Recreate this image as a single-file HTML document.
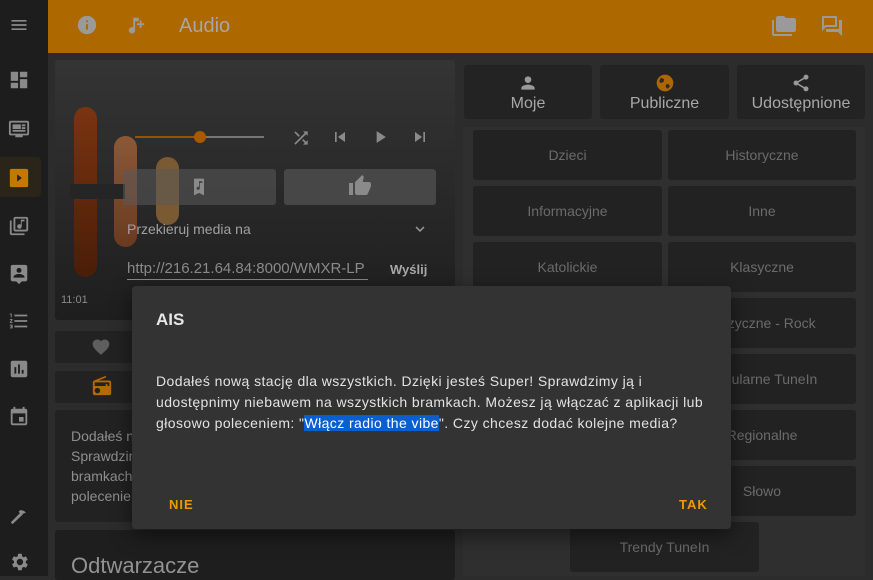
<!DOCTYPE html>
<html><head><meta charset="utf-8"><style>
*{box-sizing:border-box;margin:0;padding:0}
body{width:873px;height:576px;overflow:hidden;background:#2c2c2c;font-family:"Liberation Sans","DejaVu Sans",sans-serif;position:relative}
.abs{position:absolute}
.sb{left:0;top:0;width:48px;height:576px;background:#1d1d1d}
.hdr{left:48px;top:0;width:825px;height:53px;background:#ad6800}
.ic{position:absolute;fill:#8a8a8a}
.btn{position:absolute;background:#222;border-radius:3px;color:#6b6b6b;font-size:14px;display:flex;align-items:center;justify-content:center}
.tab{position:absolute;background:#232323;border-radius:3px;color:#a8a8a8;font-size:16px;text-align:center}
</style></head><body>
<div class="abs sb"></div>
<div class="abs" style="left:0;top:157px;width:41px;height:40px;background:#2a2419;border-radius:0 4px 4px 0"></div>
<svg class="ic" style="left:9px;top:15px" width="20" height="20" viewBox="0 0 24 24"><path d="M3 6h18v2H3zm0 5h18v2H3zm0 5h18v2H3z"/></svg>
<svg class="ic" style="left:8px;top:69px" width="22" height="22" viewBox="0 0 24 24"><path d="M3 13h8V3H3zm0 8h8v-6H3zm10 0h8V11h-8zm0-18v6h8V3z"/></svg>
<svg class="ic" style="left:8px;top:118px" width="22" height="22" viewBox="0 0 24 24"><path d="M21 3H3c-1.1 0-2 .9-2 2v12c0 1.1.9 2 2 2h5v2h8v-2h5c1.1 0 2-.9 2-2V5c0-1.1-.9-2-2-2zm0 14H3V5h18zM5 7h9v5H5zm10 0h4v2h-4zm0 3h4v2h-4zM5 13h14v2H5z"/></svg>
<svg style="position:absolute;left:8px;top:167px" width="22" height="22" viewBox="0 0 24 24"><rect x="2" y="2" width="20" height="20" rx="2" fill="#c57800"/><path d="M10 8l5 4-5 4z" fill="#222"/></svg>
<svg class="ic" style="left:8px;top:215px" width="22" height="22" viewBox="0 0 24 24"><path d="M20 2H8c-1.1 0-2 .9-2 2v12c0 1.1.9 2 2 2h12c1.1 0 2-.9 2-2V4c0-1.1-.9-2-2-2zm0 14H8V4h12zm-7.5-1a2.5 2.5 0 0 0 2.5-2.5V7h3V5h-4v5.5a2.5 2.5 0 1 0-1.5 4.5zM4 6H2v14c0 1.1.9 2 2 2h14v-2H4z"/></svg>
<svg class="ic" style="left:8px;top:263px" width="22" height="22" viewBox="0 0 24 24"><path d="M19 2H5c-1.1 0-2 .9-2 2v14c0 1.1.9 2 2 2h4l3 3 3-3h4c1.1 0 2-.9 2-2V4c0-1.1-.9-2-2-2zm-7 3.3a2.7 2.7 0 1 1 0 5.4 2.7 2.7 0 0 1 0-5.4zM18 16H6v-.9c0-2 4-3.1 6-3.1s6 1.1 6 3.1z"/></svg>
<svg class="ic" style="left:8px;top:310px" width="22" height="22" viewBox="0 0 24 24"><path d="M2 17h2v.5H3v1h1v.5H2v1h3v-4H2zm1-9h1V4H2v1h1zm-1 3h1.8L2 13.1v.9h3v-1H3.2L5 10.9V10H2zm5-6v2h14V5zm0 14h14v-2H7zm0-6h14v-2H7z"/></svg>
<svg class="ic" style="left:8px;top:358px" width="22" height="22" viewBox="0 0 24 24"><path d="M19 3H5c-1.1 0-2 .9-2 2v14c0 1.1.9 2 2 2h14c1.1 0 2-.9 2-2V5c0-1.1-.9-2-2-2zM9 17H7v-7h2zm4 0h-2V7h2zm4 0h-2v-4h2z"/></svg>
<svg class="ic" style="left:8px;top:406px" width="22" height="22" viewBox="0 0 24 24"><path d="M17 12h-5v5h5zM16 1v2H8V1H6v2H5c-1.1 0-2 .9-2 2v14c0 1.1.9 2 2 2h14c1.1 0 2-.9 2-2V5c0-1.1-.9-2-2-2h-1V1zm3 18H5V8h14z"/></svg>
<svg class="ic" style="left:8px;top:504px" width="22" height="22" viewBox="0 0 24 24"><path d="M3 20l10-10-1.5-1.5 2-2 4 1 2 2-3 1-1 1.5L5 22z"/></svg>
<svg class="ic" style="left:8px;top:551px" width="22" height="22" viewBox="0 0 24 24"><path d="M19.4 13a7.5 7.5 0 0 0 0-2l2.1-1.6-2-3.5-2.5 1a7 7 0 0 0-1.7-1L15 3h-4l-.4 2.7a7 7 0 0 0-1.7 1l-2.5-1-2 3.5L6.6 11a7.5 7.5 0 0 0 0 2l-2.2 1.6 2 3.5 2.5-1a7 7 0 0 0 1.7 1L11 21h4l.4-2.7a7 7 0 0 0 1.7-1l2.5 1 2-3.5zM13 15.5a3.5 3.5 0 1 1 0-7 3.5 3.5 0 0 1 0 7z"/></svg>

<div class="abs hdr"></div>
<svg class="ic" style="left:76px;top:14px;fill:#9a9a9a" width="22" height="22" viewBox="0 0 24 24"><path d="M12 2a10 10 0 1 0 0 20 10 10 0 0 0 0-20zm1 15h-2v-6h2zm0-8h-2V7h2z"/></svg>
<svg class="ic" style="left:124px;top:15px;fill:#9a9a9a" width="24" height="22" viewBox="0 0 24 24"><path d="M9 3v10.5A3.5 3.5 0 1 0 11 16V7h4V3zm9 6V6h-2v3h-3v2h3v3h2v-3h3V9z"/></svg>
<div class="abs" style="left:179px;top:15px;font-size:20px;color:#a6a6a6">Audio</div>
<svg class="ic" style="left:771px;top:14px;fill:#9a9a9a" width="26" height="24" viewBox="0 0 24 24"><path d="M2 6H0v14c0 1.1.9 2 2 2h18v-2H2zm20-2h-8l-2-2H6c-1.1 0-2 .9-2 2v12c0 1.1.9 2 2 2h16c1.1 0 2-.9 2-2V6c0-1.1-.9-2-2-2z"/></svg>
<svg class="ic" style="left:820px;top:14px;fill:#9a9a9a" width="24" height="24" viewBox="0 0 24 24"><path d="M15 4v7H5.2L4 12.2V4zm1-2H3c-.6 0-1 .4-1 1v14l4-4h10c.6 0 1-.4 1-1V3c0-.6-.4-1-1-1zm5 4h-2v9H6v2c0 .6.4 1 1 1h11l4 4V7c0-.6-.4-1-1-1z"/></svg>

<div class="abs" style="left:55px;top:60px;width:400px;height:260px;background:linear-gradient(#343434,#1e1e1e);border-radius:3px"></div>
<div class="abs" style="left:74px;top:107px;width:23px;height:170px;border-radius:12px;background:linear-gradient(#7a3410,#4a1d08)"></div>
<div class="abs" style="left:114px;top:136px;width:23px;height:111px;border-radius:12px;background:linear-gradient(#8b5838,#6a3a20)"></div>
<div class="abs" style="left:156px;top:157px;width:23px;height:68px;border-radius:12px;background:#7a5a32"></div>
<div class="abs" style="left:70px;top:184px;width:55px;height:15px;background:#252525"></div>
<div class="abs" style="left:135px;top:136px;width:65px;height:2px;background:#9a5200"></div>
<div class="abs" style="left:200px;top:136px;width:64px;height:2px;background:#777"></div>
<div class="abs" style="left:194px;top:131px;width:12px;height:12px;border-radius:50%;background:#a85a00"></div>
<svg class="ic" style="left:291px;top:128px;fill:#8a8a8a" width="20" height="20" viewBox="0 0 24 24"><path d="M10.6 9.2L5.4 4 4 5.4l5.2 5.2zM14.5 4l2 2L4 18.6 5.4 20 18 7.5l2 2V4zm.3 9.4l-1.4 1.4 3.1 3.1L14.5 20H20v-5.5l-2 2z"/></svg>
<svg class="ic" style="left:330px;top:127px" width="20" height="20" viewBox="0 0 24 24"><path d="M6 6h2v12H6zm3.5 6l8.5 6V6z"/></svg>
<svg class="ic" style="left:370px;top:127px" width="20" height="20" viewBox="0 0 24 24"><path d="M8 5v14l11-7z"/></svg>
<svg class="ic" style="left:410px;top:127px" width="20" height="20" viewBox="0 0 24 24"><path d="M6 18l8.5-6L6 6zM16 6v12h2V6z"/></svg>
<div class="abs" style="left:123px;top:169px;width:153px;height:36px;background:rgba(90,90,90,.55);border-radius:3px"></div>
<div class="abs" style="left:284px;top:169px;width:152px;height:36px;background:#474747;border-radius:3px"></div>
<svg class="ic" style="left:189px;top:177px" width="20" height="20" viewBox="0 0 24 24"><path d="M18 2H6v20l6-3 6 3zm-5 11.5a2 2 0 1 1-1-1.7V5h4v2h-3z"/></svg>
<svg class="ic" style="left:347px;top:174px" width="26" height="24" viewBox="0 0 24 24"><path d="M1 21h4V9H1zm22-11c0-1.1-.9-2-2-2h-6.3l1-4.6v-.3c0-.4-.2-.8-.4-1.1L14.2 1 7.6 7.6C7.2 7.9 7 8.4 7 9v10c0 1.1.9 2 2 2h9c.8 0 1.5-.5 1.8-1.2l3-7.1c.1-.2.2-.5.2-.7z"/></svg>
<div class="abs" style="left:127px;top:221px;font-size:14px;color:#a0a0a0">Przekieruj media na</div>
<svg class="ic" style="left:411px;top:220px;fill:#999" width="18" height="18" viewBox="0 0 24 24"><path d="M7.4 8.6L12 13.2l4.6-4.6L18 10l-6 6-6-6z"/></svg>
<div class="abs" style="left:127px;top:260px;width:241px;font-size:15px;color:#8a8a8a;overflow:hidden;white-space:nowrap;border-bottom:1px solid #888;padding-bottom:2px">http://216.21.64.84:8000/WMXR-LP</div>
<div class="abs" style="left:390px;top:262px;font-size:13px;color:#a8a8a8;font-weight:bold">Wyślij</div>
<div class="abs" style="left:61px;top:294px;font-size:11px;color:#8a8a8a">11:01</div>
<div class="abs" style="left:55px;top:331px;width:400px;height:32px;background:#222;border-radius:3px"></div>
<svg class="ic" style="left:91px;top:337px;fill:#5e5e5e" width="20" height="20" viewBox="0 0 24 24"><path d="M12 21.4l-1.5-1.3C5.4 15.4 2 12.3 2 8.5 2 5.4 4.4 3 7.5 3c1.7 0 3.4.8 4.5 2.1C13.1 3.8 14.8 3 16.5 3 19.6 3 22 5.4 22 8.5c0 3.8-3.4 6.9-8.5 11.5z"/></svg>
<div class="abs" style="left:55px;top:371px;width:400px;height:32px;background:#222;border-radius:3px"></div>
<svg class="ic" style="left:91px;top:375px;fill:#b56a00" width="22" height="22" viewBox="0 0 24 24"><path d="M3.2 6.2C2.5 6.5 2 7.2 2 8v12c0 1.1.9 2 2 2h16c1.1 0 2-.9 2-2V8c0-1.1-.9-2-2-2H8.3l8.3-3.4L15.9 1zM7 20a3 3 0 1 1 0-6 3 3 0 0 1 0 6zm13-8h-2v-2h-2v2H4V8h16z"/></svg>
<div class="abs" style="left:55px;top:410px;width:400px;height:112px;background:#222;border-radius:3px"></div>
<div class="abs" style="left:71px;top:426px;font-size:14px;line-height:20px;color:#8e8e8e;width:70px;overflow:hidden;white-space:nowrap">Dodałeś n<br>Sprawdzim<br>bramkach<br>poleceniem</div>
<div class="abs" style="left:55px;top:530px;width:400px;height:50px;background:#1e1e1e;border-radius:3px"></div>
<div class="abs" style="left:71px;top:553px;font-size:22px;color:#929292">Odtwarzacze</div>

<div class="tab" style="left:464px;top:65px;width:128px;height:54px"><svg style="display:block;margin:8px auto 0" width="20" height="20" viewBox="0 0 24 24" fill="#999"><path d="M12 12a4 4 0 1 0 0-8 4 4 0 0 0 0 8zm0 2c-2.7 0-8 1.3-8 4v2h16v-2c0-2.7-5.3-4-8-4z"/></svg><div style="margin-top:2px">Moje</div></div>
<div class="tab" style="left:600px;top:65px;width:129px;height:54px"><svg style="display:block;margin:8px auto 0" width="20" height="20" viewBox="0 0 24 24"><circle cx="12" cy="12" r="10" fill="#ad6600"/><path d="M7 6c2 0 3 1 4 2l-1 3-3 1-2-2zm6 8l3-1 2 3-3 3-2-2z" fill="#2a2a2a"/></svg><div style="margin-top:2px">Publiczne</div></div>
<div class="tab" style="left:737px;top:65px;width:128px;height:54px"><svg style="display:block;margin:8px auto 0" width="20" height="20" viewBox="0 0 24 24" fill="#999"><path d="M18 16c-.8 0-1.5.3-2 .8l-7.1-4.2c.1-.2.1-.4.1-.6s0-.4-.1-.6L16 7.2c.5.5 1.2.8 2 .8a3 3 0 1 0-3-3c0 .2 0 .4.1.6L8 9.8C7.5 9.3 6.8 9 6 9a3 3 0 1 0 0 6c.8 0 1.5-.3 2-.8l7.1 4.2c-.1.2-.1.4-.1.6a3 3 0 1 0 3-3z"/></svg><div style="margin-top:2px">Udostępnione</div></div>
<div class="abs" style="left:463px;top:127px;width:402px;height:449px;background:#2f2f2f"></div>
<div class="btn" style="left:473px;top:130px;width:189px;height:50px">Dzieci</div>
<div class="btn" style="left:668px;top:130px;width:188px;height:50px">Historyczne</div>
<div class="btn" style="left:473px;top:186px;width:189px;height:50px">Informacyjne</div>
<div class="btn" style="left:668px;top:186px;width:188px;height:50px">Inne</div>
<div class="btn" style="left:473px;top:242px;width:189px;height:50px">Katolickie</div>
<div class="btn" style="left:668px;top:242px;width:188px;height:50px">Klasyczne</div>
<div class="btn" style="left:473px;top:298px;width:189px;height:50px"></div>
<div class="btn" style="left:668px;top:298px;width:188px;height:50px">Muzyczne - Rock</div>
<div class="btn" style="left:473px;top:354px;width:189px;height:50px"></div>
<div class="btn" style="left:668px;top:354px;width:188px;height:50px">Popularne TuneIn</div>
<div class="btn" style="left:473px;top:410px;width:189px;height:50px"></div>
<div class="btn" style="left:668px;top:410px;width:188px;height:50px">Regionalne</div>
<div class="btn" style="left:473px;top:466px;width:189px;height:50px"></div>
<div class="btn" style="left:668px;top:466px;width:188px;height:50px">Słowo</div>
<div class="btn" style="left:570px;top:522px;width:189px;height:50px">Trendy TuneIn</div>

<div class="abs" style="left:132px;top:286px;width:599px;height:243px;background:#333;border-radius:4px;box-shadow:0 6px 20px rgba(0,0,0,.5)">
<div style="position:absolute;left:24px;top:24px;font-size:17px;color:#e6e6e6;font-weight:bold">AIS</div>
<div style="position:absolute;left:24px;top:85px;white-space:nowrap;font-size:14px;line-height:21px;color:#e2e2e2;letter-spacing:.42px">Dodałeś nową stację dla wszystkich. Dzięki jesteś Super! Sprawdzimy ją i<br>udostępnimy niebawem na wszystkich bramkach. Możesz ją włączać z aplikacji lub<br>głosowo poleceniem: "<span style="background:#0a5fd0;color:#fff">Włącz radio the vibe</span>". Czy chcesz dodać kolejne media?</div>
<div style="position:absolute;left:37px;top:211px;font-size:13px;font-weight:bold;color:#f29900;letter-spacing:1px">NIE</div>
<div style="position:absolute;left:547px;top:211px;font-size:13px;font-weight:bold;color:#f29900;letter-spacing:1px">TAK</div>
</div>
</body></html>
